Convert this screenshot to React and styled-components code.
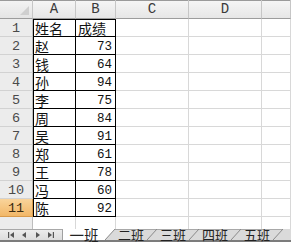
import React from "react";
import styled, { createGlobalStyle } from "styled-components";

const GlobalStyle = createGlobalStyle`
  html, body {
    margin: 0;
    padding: 0;
    background: #fff;
  }
  body {
    width: 291px;
    height: 242px;
    overflow: hidden;
    font-family: "Liberation Sans", "Noto Sans CJK SC", sans-serif;
  }
`;

const Sheet = styled.div`
  display: flex;
  flex-direction: column;
  width: 291px;
  height: 242px;
  overflow: hidden;
`;

const Grid = styled.div`
  display: grid;
  grid-template-columns: 33px 43px 40px 73px 73px 1fr;
  grid-template-rows: 19px repeat(12, 18px);
  height: 229px;
  overflow: hidden;
  flex-shrink: 0;
`;

const Corner = styled.div`
  background: linear-gradient(#f4f4f4, #e4e4e4);
  border-right: 1px solid #c6c6c6;
  border-bottom: 1px solid #9c9c9c;
  box-shadow: inset 0 1px 0 #9a9a9a;
  display: flex;
  align-items: flex-end;
  justify-content: flex-end;
  padding: 0 3px 3px 0;
`;

const Triangle = styled.div`
  width: 0;
  height: 0;
  border-left: 9px solid transparent;
  border-bottom: 9px solid #cfcfcf;
`;

const ColHead = styled.div`
  background: linear-gradient(#f6f6f6, #e6e6e6);
  border-right: 1px solid #c6c6c6;
  border-bottom: 1px solid #9c9c9c;
  box-shadow: inset 0 1px 0 #9a9a9a;
  display: flex;
  align-items: center;
  justify-content: center;
  font-family: "Liberation Mono", monospace;
  font-size: 14px;
  line-height: 16px;
  color: #3a3a3a;
`;

const RowHead = styled.div`
  background: ${(p) =>
    p.$selected ? "linear-gradient(#f9d49b, #f2b767)" : "#ececec"};
  border-right: 1px solid ${(p) => (p.$selected ? "#d99a4a" : "#bdbdbd")};
  border-bottom: 1px solid ${(p) => (p.$selected ? "#d99a4a" : "#d2d2d2")};
  display: flex;
  align-items: center;
  justify-content: center;
  padding-top: 2px;
  box-sizing: border-box;
  font-family: "Liberation Mono", monospace;
  font-size: 13.5px;
  line-height: 16px;
  color: ${(p) => (p.$selected ? "#3a2a10" : "#4a4a4a")};
`;

const Cell = styled.div`
  border-right: 1px solid ${(p) => (p.$boxed ? "#000" : "#d8d8d8")};
  border-bottom: 1px solid ${(p) => (p.$boxed ? "#000" : "#d8d8d8")};
  box-shadow: ${(p) =>
    [p.$left && "inset 1px 0 0 #000", p.$top && "inset 0 1px 0 #000"]
      .filter(Boolean)
      .join(", ") || "none"};
  display: flex;
  align-items: center;
  justify-content: ${(p) => (p.$num ? "flex-end" : "flex-start")};
  padding: ${(p) => (p.$num ? "2px 3px 0 0" : "1px 0 0 2px")};
  box-sizing: border-box;
  font-family: ${(p) =>
    p.$num
      ? `"Liberation Mono", monospace`
      : `"Noto Sans CJK SC", sans-serif`};
  font-size: ${(p) => (p.$num ? "12.5px" : "14px")};
  line-height: 16px;
  color: #111;
  white-space: nowrap;
  overflow: hidden;
`;

const TabBar = styled.div`
  display: flex;
  height: 13px;
  background: #dadada;
  border-bottom: 2px solid #7c7c7c;
  box-sizing: border-box;
  flex-shrink: 0;
`;

const Nav = styled.div`
  width: 63px;
  display: flex;
  align-items: center;
  justify-content: space-around;
  padding: 0 4px;
  box-sizing: border-box;
  background: linear-gradient(#ececec, #dcdcdc);
  border-top: 1px solid #a8a8a8;
  border-right: 1px solid #a0a0a0;
`;

const Tab = styled.div`
  width: ${(p) => (p.$active ? "42px" : "auto")};
  padding: ${(p) => (p.$active ? "0" : "0 3px")};
  background: ${(p) => (p.$active ? "#fff" : "transparent")};
  border-top: 1px solid ${(p) => (p.$active ? "#fff" : "#a8a8a8")};
  box-sizing: border-box;
  display: flex;
  align-items: center;
  justify-content: center;
  font-family: "Noto Sans CJK SC", sans-serif;
  font-size: ${(p) => (p.$active ? "14.5px" : "13px")};
  line-height: 10px;
  color: #222;
  white-space: nowrap;
`;

const Slash = ({ active }) => (
  <svg width="10" height="11" viewBox="0 0 10 11" style={{ display: "block", flexShrink: 0 }}>
    {active ? (
      <polygon points="0,0 10,0 0,11" fill="#fff" />
    ) : (
      <line x1="0" y1="0.5" x2="10" y2="0.5" stroke="#a8a8a8" strokeWidth="1" />
    )}
    <line x1="0" y1="11" x2="10" y2="0" stroke="#8a8a8a" strokeWidth="1" />
  </svg>
);

const NavIcon = ({ kind }) => (
  <svg width="8" height="8" viewBox="0 0 8 8" style={{ display: "block" }}>
    {kind === "first" && (
      <>
        <rect x="1" y="1" width="1.2" height="6" fill="#555" />
        <polygon points="7,1 7,7 3,4" fill="#555" />
      </>
    )}
    {kind === "prev" && <polygon points="6,1 6,7 2,4" fill="#555" />}
    {kind === "next" && <polygon points="2,1 2,7 6,4" fill="#555" />}
    {kind === "last" && (
      <>
        <polygon points="1,1 1,7 5,4" fill="#555" />
        <rect x="5.8" y="1" width="1.2" height="6" fill="#555" />
      </>
    )}
  </svg>
);

const data = [
  ["姓名", "成绩"],
  ["赵", "73"],
  ["钱", "64"],
  ["孙", "94"],
  ["李", "75"],
  ["周", "84"],
  ["吴", "91"],
  ["郑", "61"],
  ["王", "78"],
  ["冯", "60"],
  ["陈", "92"],
];

const tabs = ["一班", "二班", "三班", "四班", "五班"];

const App = () => {
  return (
    <Sheet>
      <GlobalStyle />
      <Grid>
        <Corner>
          <Triangle />
        </Corner>
        {["A", "B", "C", "D", ""].map((c, i) => (
          <ColHead key={i}>{c}</ColHead>
        ))}
        {data.map((row, r) => (
          <React.Fragment key={r}>
            <RowHead $selected={r === 10}>{r + 1}</RowHead>
            <Cell $boxed $left $top={r === 0}>
              {row[0]}
            </Cell>
            <Cell $boxed $top={r === 0} $num={r > 0}>
              {row[1]}
            </Cell>
            <Cell />
            <Cell />
            <Cell />
          </React.Fragment>
        ))}
        <RowHead />
        <Cell />
        <Cell />
        <Cell />
        <Cell />
        <Cell />
      </Grid>
      <TabBar>
        <Nav>
          <NavIcon kind="first" />
          <NavIcon kind="prev" />
          <NavIcon kind="next" />
          <NavIcon kind="last" />
        </Nav>
        {tabs.map((t, i) => (
          <React.Fragment key={t}>
            <Tab $active={i === 0}>{t}</Tab>
            <Slash active={i === 0} />
          </React.Fragment>
        ))}
      </TabBar>
    </Sheet>
  );
};

export default App;
